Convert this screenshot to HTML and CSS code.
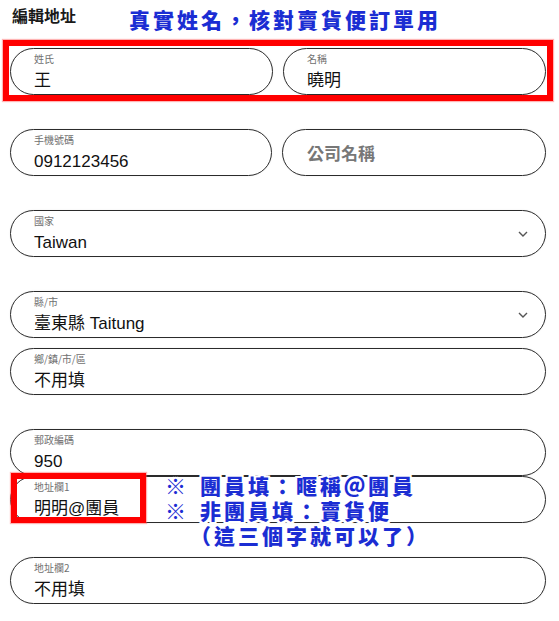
FILE: index.html
```html
<!DOCTYPE html>
<html lang="zh-Hant">
<head>
<meta charset="utf-8">
<title>編輯地址</title>
<link rel="stylesheet" href="styles.css">
</head>
<body>
<div class="page">
  <header class="header">
    <h1 class="title">編輯地址</h1>
    <p class="note">真實姓名，核對賣貨便訂單用</p>
  </header>

  <div class="form">
    <div class="row highlighted">
      <div class="field">
        <span class="label">姓氏</span>
        <span class="value">王</span>
      </div>
      <div class="field">
        <span class="label">名稱</span>
        <span class="value">曉明</span>
      </div>
      <div class="red-frame frame-row"></div>
    </div>

    <div class="row gap-lg">
      <div class="field">
        <span class="label">手機號碼</span>
        <span class="value">0912123456</span>
      </div>
      <div class="field field-empty">
        <span class="placeholder">公司名稱</span>
      </div>
    </div>

    <div class="field select gap-lg">
      <div class="select-text">
        <span class="label">國家</span>
        <span class="value">Taiwan</span>
      </div>
      <svg class="chevron" width="10" height="6" viewBox="0 0 10 6"><polyline points="1,1 5,5 9,1" fill="none" stroke="#555" stroke-width="1.4"/></svg>
    </div>

    <div class="field select gap-lg">
      <div class="select-text">
        <span class="label">縣/市</span>
        <span class="value">臺東縣 Taitung</span>
      </div>
      <svg class="chevron" width="10" height="6" viewBox="0 0 10 6"><polyline points="1,1 5,5 9,1" fill="none" stroke="#555" stroke-width="1.4"/></svg>
    </div>

    <div class="field gap-sm">
      <span class="label">鄉/鎮/市/區</span>
      <span class="value">不用填</span>
    </div>

    <div class="field gap-lg">
      <span class="label">郵政編碼</span>
      <span class="value">950</span>
    </div>

    <div class="field annotated">
      <span class="label">地址欄1</span>
      <span class="value">明明@團員</span>
      <div class="red-frame frame-addr"></div>
      <div class="callout">
        <div class="callout-line"><span class="mark">※</span>團員填：暱稱＠團員</div>
        <div class="callout-line"><span class="mark">※</span>非團員填：賣貨便</div>
        <div class="callout-line indent">（這三個字就可以了）</div>
      </div>
    </div>

    <div class="field gap-lg">
      <span class="label">地址欄2</span>
      <span class="value">不用填</span>
    </div>
  </div>
</div>
</body>
</html>
```

FILE: styles.css
```css
* {
  box-sizing: border-box;
}

html, body {
  margin: 0;
  padding: 0;
  background: #ffffff;
}

body {
  font-family: "Liberation Sans", Arial, "Noto Sans CJK TC", sans-serif;
  color: #111111;
}

.page {
  width: 559px;
  padding: 0 13px 0 10px;
}

.header {
  height: 48px;
  display: flex;
  align-items: flex-start;
}

.title {
  margin: 4px 0 0 2px;
  font-size: 16px;
  line-height: 22px;
  font-weight: 700;
  color: #1a1a1a;
  font-family: "Noto Sans CJK TC", sans-serif;
}

.note {
  margin: 6px 0 0 53px;
  font-size: 21px;
  line-height: 26px;
  font-weight: 900;
  letter-spacing: 3px;
  color: #1b2dd3;
  font-family: "Noto Sans CJK TC", sans-serif;
}

.form {
  display: flex;
  flex-direction: column;
}

.row {
  display: flex;
  gap: 10px;
  position: relative;
}

.row .field {
  flex: 1 1 0;
}

.gap-lg {
  margin-top: 34px;
}

.gap-sm {
  margin-top: 10px;
}

.field {
  position: relative;
  height: 47px;
  border: 1px solid #2b2b2b;
  border-radius: 24px;
  padding: 4px 23px 0 23px;
  display: flex;
  flex-direction: column;
  background: #ffffff;
  box-shadow: 0 0 2px rgba(0, 0, 0, 0.08);
}

.label {
  display: block;
  font-size: 10px;
  line-height: 12px;
  color: #707070;
  font-family: "Noto Sans CJK TC", sans-serif;
}

.value {
  display: block;
  margin-top: 6px;
  font-size: 17px;
  line-height: 20px;
  color: #111111;
}

.field-empty {
  padding: 0 24px;
  justify-content: center;
}

.placeholder {
  font-size: 17px;
  line-height: 22px;
  font-weight: 700;
  color: #777777;
  font-family: "Noto Sans CJK TC", sans-serif;
}

.select {
  flex-direction: row;
  align-items: flex-start;
  justify-content: space-between;
  padding-right: 17px;
}

.select-text {
  display: flex;
  flex-direction: column;
}

.chevron {
  align-self: center;
  margin-top: -3px;
}

.red-frame {
  position: absolute;
  border: 6px solid #ff0000;
  box-shadow: 0 0 1px 1px rgba(255, 90, 90, 0.45);
  pointer-events: none;
}

.frame-row {
  left: -7px;
  right: -7px;
  top: -8px;
  bottom: -6px;
}

.frame-addr {
  left: 0px;
  top: -4px;
  width: 135px;
  height: 50px;
}

.callout {
  position: absolute;
  left: 154px;
  top: -4px;
  font-family: "Noto Sans CJK TC", sans-serif;
  font-size: 21px;
  line-height: 25px;
  font-weight: 900;
  letter-spacing: 3px;
  color: #1b2dd3;
  white-space: nowrap;
  text-shadow:
    2px 0 0 #fff, -2px 0 0 #fff, 0 2px 0 #fff, 0 -2px 0 #fff,
    2px 2px 0 #fff, -2px -2px 0 #fff, 2px -2px 0 #fff, -2px 2px 0 #fff;
}

.mark {
  display: inline-block;
  margin-right: 11px;
}

.callout-line.indent {
  padding-left: 25px;
}
```
